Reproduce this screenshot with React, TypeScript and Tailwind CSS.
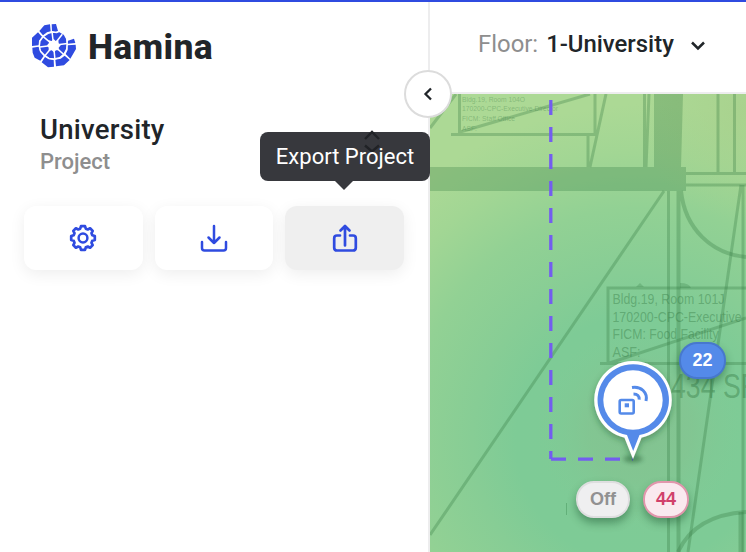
import type { ReactNode } from "react";

const RAYS = [-97, -52, -8, 42, 85, 130, 173, 220];

function Logo() {
  return (
    <svg className="-mt-px h-[52px] w-[52px] shrink-0" viewBox="0 0 156 156">
      <path
        fill="#2f4be0"
        d="M71 13L84 12 90 33 82 35 72 34ZM34 33L49 16 66 13 68 34 57 37 45 46ZM12 78L12 53 30 37 42 50 33 62 32 76ZM13 83L32 80 36 95 47 108 37 122 20 113 14 98ZM51 111L62 118 77 120 78 140 60 142 41 127ZM82 119L98 116 110 107 125 120 108 136 84 139ZM119 76L143 74 144 87 127 116 113 102 119 90ZM120 62L138 56 142 69 119 71Z"
      />
      <path
        fill="#2f4be0"
        stroke="#fff"
        strokeWidth="4"
        d="M60 40L74 36 86 38 94 34 109 43 116 56 117 72 116 87 108 102 95 113 79 117 63 115 49 105 38 94 34 79 36 63 46 49Z"
      />
      <g stroke="#fff" strokeWidth="4.500">
        {RAYS.map((a) => (
          <path key={a} d="M0 0H42" transform={`translate(77 76) rotate(${a})`} />
        ))}
      </g>
      <path
        fill="#fff"
        d="M77 57L83 63 91 61 92 70 98 76 92 83 93 91 84 91 78 97 71 91 62 92 62 83 57 76 63 69 62 61 71 63Z"
      />
    </svg>
  );
}

const ToolIcon = ({ children }: { children: ReactNode }) => (
  <svg
    className="h-8 w-8"
    viewBox="0 0 32 32"
    fill="none"
    stroke="#2f4be0"
    strokeWidth="2.5"
    strokeLinecap="round"
    strokeLinejoin="round"
  >
    {children}
  </svg>
);

function FloorPlan() {
  return (
    <svg className="block h-[458px] w-[316px]" viewBox="430 94 316 458">
      <defs>
        <radialGradient id="heat" gradientUnits="userSpaceOnUse" cx="640" cy="440" r="400">
          <stop offset="0" stopColor="#7fcb96" />
          <stop offset=".31" stopColor="#7ecb96" />
          <stop offset=".42" stopColor="#87cd95" />
          <stop offset=".58" stopColor="#92d194" />
          <stop offset=".72" stopColor="#a2d694" />
          <stop offset=".84" stopColor="#acd995" />
        </radialGradient>
        <radialGradient id="warm">
          <stop offset="0" stopColor="#84c08f" />
          <stop offset=".5" stopColor="#84c390" stopOpacity=".8" />
          <stop offset="1" stopColor="#80cb96" stopOpacity="0" />
        </radialGradient>
        <radialGradient id="glow">
          <stop offset="0" stopColor="#a7cf8b" />
          <stop offset="1" stopColor="#a8d28e" stopOpacity="0" />
        </radialGradient>
        <filter id="pinShadow" x="-30%" y="-30%" width="160%" height="160%">
          <feDropShadow dx="0" dy="3" stdDeviation="3" floodColor="#174d27" floodOpacity=".4" />
        </filter>
        <filter id="soft" x="-50%" y="-100%" width="200%" height="300%">
          <feGaussianBlur stdDeviation="2" />
        </filter>
      </defs>
      <rect x="430" y="94" width="316" height="458" fill="url(#heat)" />
      <circle cx="640" cy="430" r="105" fill="url(#warm)" opacity=".8" />
      <circle cx="746" cy="110" r="110" fill="url(#glow)" opacity=".7" />

      <g fill="#1f6b35" fillOpacity=".25">
        <rect x="430" y="167" width="256" height="24" />
        <path d="M654 94H683L681 167H654Z" />
      </g>
      <g stroke="#31763f" strokeOpacity=".3" strokeWidth="3" fill="none">
        <path d="M456 94L430 128M459.500 94V134M451 134.500H595V94M460 132L590 94M588 135V167M606 94L590 167M644.500 94V167M649 94L646 167M718 94V173M734.500 94V173M686 173.500H746M686 185H746" />
        <path d="M664 191L430 535M668.500 191V552M743 185V552M741 185L688 552" />
        <path strokeWidth="4" d="M678.500 191V552M681 191C685 229 712 254 746 257" />
        <path d="M746 288H608V363.500H746M600 363.500H608L746 318" />
        <path strokeWidth="4" d="M678 552C690 526 714 514 746 512" />
        <path strokeWidth="5" d="M741 512V552" />
      </g>
      <g fill="#31763f" fillOpacity=".4" fontFamily="'Liberation Sans', Arial, sans-serif">
        <g fontSize="7.6" fillOpacity=".34">
          <text x="462" y="101.500" textLength="63" lengthAdjust="spacingAndGlyphs">Bldg.19, Room 104O</text>
          <text x="462" y="111" textLength="96" lengthAdjust="spacingAndGlyphs">170200-CPC-Executive Director</text>
          <text x="462" y="121" textLength="53" lengthAdjust="spacingAndGlyphs">FICM: Staff Office</text>
          <text x="462" y="130.500" textLength="15" lengthAdjust="spacingAndGlyphs">ASF:</text>
        </g>
        <g fontSize="14">
          <text x="612.500" y="304" textLength="112" lengthAdjust="spacingAndGlyphs">Bldg.19, Room 101J</text>
          <text x="612.500" y="321.500" textLength="129" lengthAdjust="spacingAndGlyphs">170200-CPC-Executive</text>
          <text x="612.500" y="339" textLength="106" lengthAdjust="spacingAndGlyphs">FICM: Food Facility</text>
          <text x="612.500" y="356.500" textLength="28" lengthAdjust="spacingAndGlyphs">ASF:</text>
        </g>
        <text x="671" y="398" fontSize="35" textLength="86" lengthAdjust="spacingAndGlyphs">434 SF</text>
      </g>
      <path d="M636 287l4-4 4 4zM680 283q9 0 11 5h-11z" fill="#31763f" fillOpacity=".25" />
      <path d="M566.500 503V515" stroke="#62b079" strokeWidth="1" />

      <path d="M550.800 100V459" stroke="#735df0" strokeWidth="3.300" strokeDasharray="15 12" />
      <path d="M551 459.200H633" stroke="#735df0" strokeWidth="3.200" strokeDasharray="15 12" />

      <ellipse cx="633" cy="459" rx="10" ry="3.500" fill="#205c35" opacity=".45" filter="url(#soft)" />
      <g filter="url(#pinShadow)">
        <path d="M625 437A38 38 0 1 1 641 437L633 457Z" fill="#fff" stroke="#fff" strokeWidth="1.500" />
        <path d="M627 435A35.700 35.700 0 1 1 639.500 435L633.200 451Z" fill="#548ae9" />
      </g>
      <circle cx="633" cy="400" r="29.700" fill="#fff" />
      <rect x="619.700" y="400" width="14" height="13.500" rx="1.500" fill="none" stroke="#548ae9" strokeWidth="2.600" />
      <rect x="624.700" y="403.300" width="4.300" height="4" fill="#548ae9" />
      <path d="M632 387.500C641 386 648 392.500 646 401M633.500 394C637.500 394 639.500 396 639.200 399.700" fill="none" stroke="#548ae9" strokeWidth="3" />
    </svg>
  );
}

export default function App() {
  return (
    <div className="flex h-[552px] w-[746px] flex-col overflow-hidden border-t-2 border-[#2f4be0] bg-white font-['Roboto',sans-serif] text-[#212529]">
      <div className="flex min-h-0 flex-1">
        <aside className="relative w-[430px] shrink-0 border-r-2 border-[#ededee]">
          <div className="flex h-[89px] items-center gap-2 pl-[28px]">
            <Logo />
            <h1 className="whitespace-nowrap pt-[3px] text-[35.5px] font-extrabold leading-none tracking-[0.3px]">Hamina</h1>
          </div>
          <div className="pl-10 pt-[21px]">
            <h2 className="text-[27.5px] font-medium leading-[36px] tracking-[0.25px]">University</h2>
            <p className="text-[22px] font-medium leading-[28px] text-[#8e8e8e]">Project</p>
          </div>
          <div className="mt-[30px] flex gap-3 pl-6 pr-6">
            <button className="flex h-16 w-[119px] items-center justify-center rounded-xl bg-white shadow-[0_4px_16px_rgba(0,0,0,0.07)]">
              <ToolIcon>
                <circle cx="16" cy="16" r="4.400" />
                <path
                  strokeWidth="2.700"
                  d="M14 4.200h4l.8 2.500 2 .8 2.300-1.200 2.600 2.600-1.200 2.300.8 2 2.500.8v4l-2.500.8-.8 2 1.200 2.300-2.600 2.600-2.300-1.200-2 .8-.8 2.500h-4l-.8-2.500-2-.8-2.300 1.200-2.600-2.600 1.200-2.300-.8-2-2.500-.8v-4l2.500-.8.8-2-1.200-2.300 2.600-2.600 2.300 1.200 2-.8z"
                />
              </ToolIcon>
            </button>
            <button className="flex h-16 w-[119px] items-center justify-center rounded-xl bg-white shadow-[0_4px_16px_rgba(0,0,0,0.07)]">
              <ToolIcon>
                <path d="M16 4v17M10.500 15.500l5.500 5.500 5.500-5.500M4 20v6q0 2.500 2.500 2.500h19q2.500 0 2.500-2.500v-6" />
              </ToolIcon>
            </button>
            <button className="flex h-16 w-[119px] items-center justify-center rounded-xl bg-[#efefef] shadow-[0_4px_16px_rgba(0,0,0,0.07)]">
              <ToolIcon>
                <path strokeWidth="2.700" d="M16 23.500V4M11.500 8.500L16 4l4.500 4.500M11 13.500H8q-2.800 0-2.800 2.800v9.400q0 2.800 2.800 2.800h16q2.800 0 2.800-2.800v-9.400q0-2.800-2.800-2.800h-3" />
              </ToolIcon>
            </button>
          </div>
          <div className="absolute left-[260px] top-[130px] z-10 flex h-[49px] w-[170px] items-center justify-center rounded-lg bg-[#37383d] text-[22px] text-white">
            <svg className="absolute left-[102px] top-[-4px]" width="20" height="28" viewBox="0 0 20 28" fill="none" stroke="#202226" strokeWidth="2.400">
              <path d="M3 11l7-7 7 7M3 17.500l7 6 7-6" />
            </svg>
            <span className="relative whitespace-nowrap">Export Project</span>
            <svg className="absolute left-[74px] top-[48px]" width="20" height="11" viewBox="0 0 20 11">
              <path d="M0 0H20L10 10Z" fill="#37383d" />
            </svg>
          </div>
          <button className="absolute left-[404px] top-[68px] z-20 flex h-12 w-12 items-center justify-center rounded-full border-2 border-[#dcdcdc] bg-white">
            <svg width="12" height="16" viewBox="0 0 12 16" fill="none" stroke="#212529" strokeWidth="2.300">
              <path d="M9 2.500L3.500 8 9 13.500" />
            </svg>
          </button>
        </aside>
        <main className="flex min-w-0 flex-1 flex-col">
          <header className="flex h-[92px] shrink-0 items-center border-b-2 border-[#ededee] pb-[5px] pl-12 text-[23.9px]">
            <span className="text-[#8e8e8e]">Floor:</span>
            <span className="ml-2 whitespace-nowrap font-medium">1-University</span>
            <svg className="ml-[15px] mt-[3px]" width="18" height="14" viewBox="0 0 18 14" fill="none" stroke="#212529" strokeWidth="2.500">
              <path d="M3 3.500l6 6 6-6" />
            </svg>
          </header>
          <div className="relative h-[458px] w-[316px] overflow-hidden">
            <FloorPlan />
            <span className="absolute left-[249px] top-[248px] flex h-[37px] w-[47px] items-center justify-center rounded-[18px] border-2 border-[#4778cd] bg-[#548ae9] font-['Liberation_Sans',sans-serif] text-[18px] font-bold text-white shadow-[0_5px_9px_rgba(25,80,45,0.45)]">22</span>
            <span className="absolute left-[146px] top-[387px] flex h-[37px] w-[54px] items-center justify-center rounded-[18px] border-2 border-[#dededf] bg-[#efeff0] font-['Liberation_Sans',sans-serif] text-[18px] font-bold text-[#919191] shadow-[0_5px_9px_rgba(25,80,45,0.45)]">Off</span>
            <span className="absolute left-[213px] top-[387px] flex h-[37px] w-[46px] items-center justify-center rounded-[18px] border-2 border-[#e196ac] bg-[#fae9ef] font-['Liberation_Sans',sans-serif] text-[18px] font-bold text-[#d1406b] shadow-[0_5px_9px_rgba(25,80,45,0.45)]">44</span>
          </div>
        </main>
      </div>
    </div>
  );
}
